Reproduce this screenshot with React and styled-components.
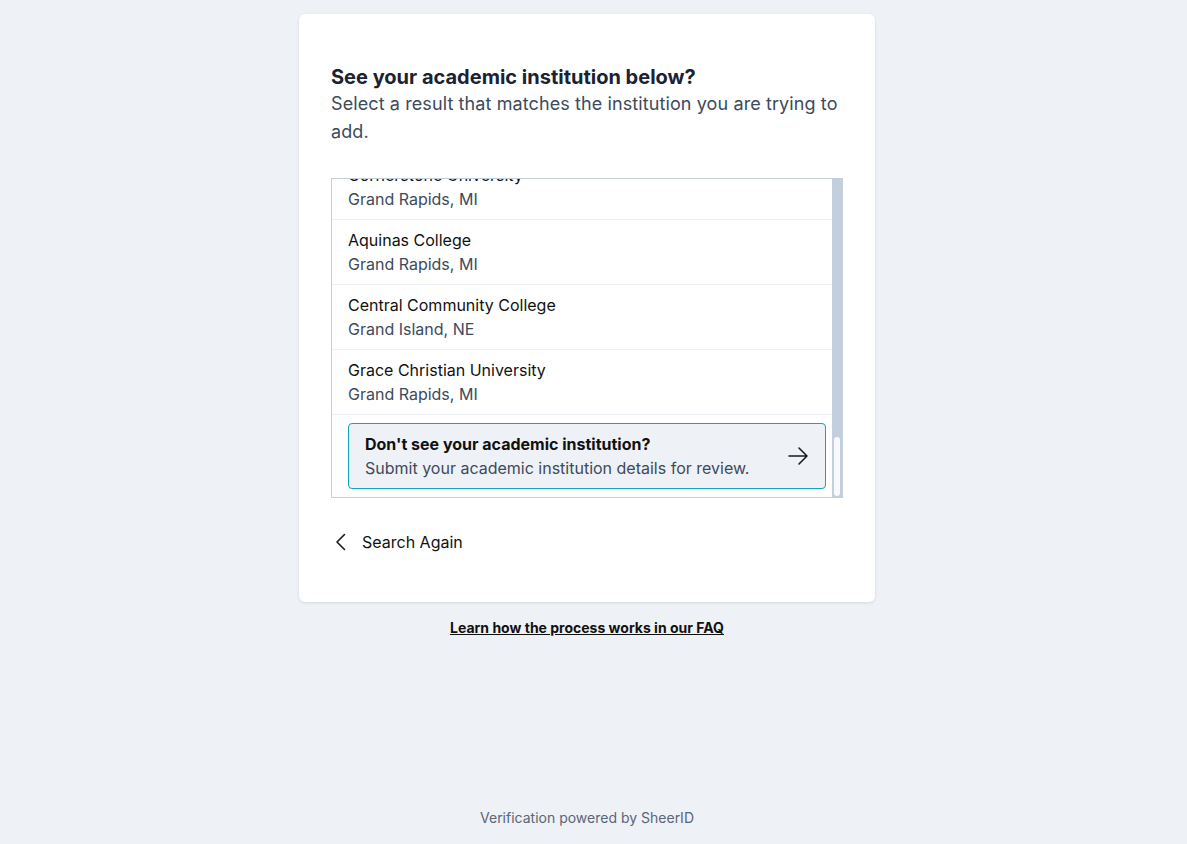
import React, { useLayoutEffect, useRef } from 'react';
import styled, { createGlobalStyle } from 'styled-components';

const border = "#c3cfdc"
const slate = "#3d4a5c"
const teal = "#16a3bf"

const GlobalStyle = createGlobalStyle`
  html, body {
    margin: 0;
    padding: 0;
    background: #eef1f6;
    font-family: Inter, 'Liberation Sans', sans-serif;
    -webkit-font-smoothing: antialiased;
  }
`

// the original page sat beside a window scrollbar, hence the right padding
const Page = styled.div`
  min-height: 100vh;
  display: flex;
  flex-direction: column;
  align-items: center;
  padding: 14px 13px 0 0;
  box-sizing: border-box;
`
const Card = styled.div`
  width: 576px;
  box-sizing: border-box;
  background: #fff;
  border-radius: 6px;
  box-shadow: 0 1px 3px rgba(30, 40, 60, .12);
  padding: 50px 32px 40px;
`
const Title = styled.h2`
  margin: 0;
  font-size: 20px;
  line-height: 26px;
  font-weight: 700;
  color: #1a2233;
`
const Lead = styled.p`
  margin: 0;
  font-size: 18px;
  letter-spacing: 0.1px;
  line-height: 28px;
  color: ${slate};
`
const ListBox = styled.div`
  margin-top: 32px;
  height: 320px;
  display: flex;
`
const Scroller = styled.div`
  flex: 1;
  min-width: 0;
  border: 1px solid ${border};
  border-right: none;
  overflow-y: auto;
  scrollbar-width: none;
  &::-webkit-scrollbar {
    display: none;
  }
`
const Track = styled.div`
  width: 11px;
  box-sizing: border-box;
  padding: 0 3px 2px 2px;
  background: ${border};
  display: flex;
  flex-direction: column;
  justify-content: flex-end;
`
const Thumb = styled.div`
  height: 59px;
  background: #f7f9fc;
  border-radius: 4px;
`
const Item = styled.div`
  padding: 8px 16px;
  border-bottom: 1px solid #edf0f4;
  line-height: 24px;
  font-size: 16px;
  cursor: pointer;
`
const Name = styled.div`
  color: #111;
`
const Place = styled.div`
  color: ${slate};
`
const Missing = styled.div`
  margin: 8px 6px 8px 16px;
  padding: 8px 16px;
  display: flex;
  align-items: center;
  background: #eef1f6;
  border: 1px solid ${teal};
  border-radius: 4px;
  font-size: 16px;
  line-height: 24px;
`
const MissingText = styled.div`
  flex: 1;
`
const MissingTitle = styled.div`
  font-weight: 700;
  color: #111;
`
const Back = styled.button`
  margin-top: 24px;
  padding: 8px 0 8px 4px;
  display: flex;
  align-items: center;
  gap: 15px;
  border: none;
  background: none;
  font-family: inherit;
  font-size: 16px;
  line-height: 24px;
  color: #111;
  cursor: pointer;
`
const FaqLink = styled.a`
  margin-top: 16px;
  font-size: 14px;
  font-weight: 700;
  line-height: 20px;
  color: #111;
  text-decoration: underline;
`
const Footer = styled.div`
  margin-top: auto;
  padding-bottom: 16px;
  font-size: 14px;
  line-height: 20px;
  color: #5a6577;
`

const schools = [
  { name: "Calvin University", place: "Grand Rapids, MI" },
  { name: "Cornerstone University", place: "Grand Rapids, MI" },
  { name: "Aquinas College", place: "Grand Rapids, MI" },
  { name: "Central Community College", place: "Grand Island, NE" },
  { name: "Grace Christian University", place: "Grand Rapids, MI" },
]

function ArrowRight() {
  return <svg width="22" height="22" viewBox="0 0 22 22" fill="none" stroke="#1a1a1a" strokeWidth="1.6" strokeLinecap="round" strokeLinejoin="round">
    <path d="M2 11h18M12 3l8 8-8 8"/>
  </svg>
}

function ChevronLeft() {
  return <svg width="12" height="18" viewBox="0 0 12 18" fill="none" stroke="#1a1a1a" strokeWidth="1.6" strokeLinecap="round" strokeLinejoin="round">
    <path d="M9.5 1.5L2 9l7.5 7.5"/>
  </svg>
}

export default function App() {
  const list = useRef(null)
  useLayoutEffect(() => {
    if (list.current) list.current.scrollTop = list.current.scrollHeight
  }, [])

  return <Page>
    <GlobalStyle />
    <Card>
      <Title>See your academic institution below?</Title>
      <Lead>Select a result that matches the institution you are trying to add.</Lead>
      <ListBox>
        <Scroller ref={list}>
          {schools.map(s => (
            <Item key={s.name}>
              <Name>{s.name}</Name>
              <Place>{s.place}</Place>
            </Item>
          ))}
          <Missing>
            <MissingText>
              <MissingTitle>Don't see your academic institution?</MissingTitle>
              <Place>Submit your academic institution details for review.</Place>
            </MissingText>
            <ArrowRight />
          </Missing>
        </Scroller>
        <Track>
          <Thumb />
        </Track>
      </ListBox>
      <Back>
        <ChevronLeft />
        Search Again
      </Back>
    </Card>
    <FaqLink href="#">Learn how the process works in our FAQ</FaqLink>
    <Footer>Verification powered by SheerID</Footer>
  </Page>
}
